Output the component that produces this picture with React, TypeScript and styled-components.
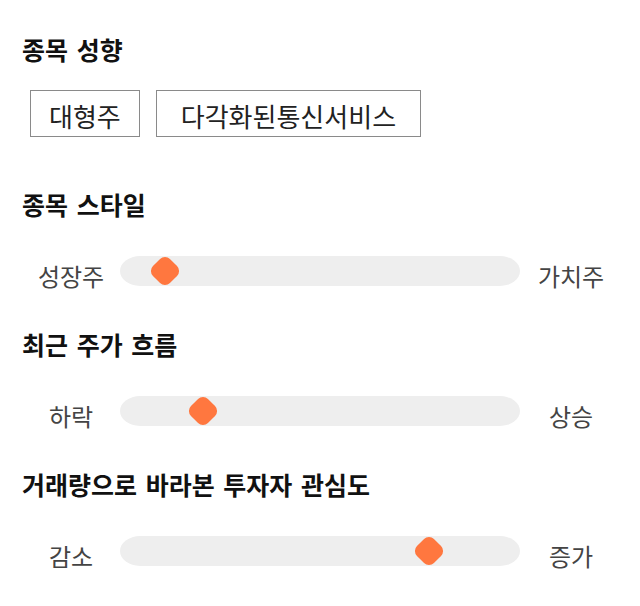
import styled, { createGlobalStyle } from "styled-components"
import React from "react"

const GlobalStyle = createGlobalStyle`
  html, body {
    margin: 0;
    padding: 0;
    background: #ffffff;
  }

  body {
    font-family: "Noto Sans CJK KR", "Noto Sans", sans-serif;
    color: #111;
  }
`

interface SliderData {
  title: string
  left: string
  right: string
  value: number
}

const sliders: SliderData[] = [
  { title: "종목 스타일", left: "성장주", right: "가치주", value: 11.25 },
  { title: "최근 주가 흐름", left: "하락", right: "상승", value: 20.75 },
  { title: "거래량으로 바라본 투자자 관심도", left: "감소", right: "증가", value: 77.25 }
]

const tags = [
  { label: "대형주", pad: 18 },
  { label: "다각화된통신서비스", pad: 24 }
]

const StyleRow = ({ left, right, value }: SliderData) => (
  <SliderRow>
    <SideLabel>{left}</SideLabel>
    <Track>
      <Thumb style={{ left: `${value}%` }} />
    </Track>
    <SideLabel>{right}</SideLabel>
  </SliderRow>
)

export default function App() {
  return <>
    <GlobalStyle />
    <Page>
      <Section>
        <Heading>종목 성향</Heading>
        <TagList>
          {tags.map(tag => (
            <Tag key={tag.label} $pad={tag.pad}>{tag.label}</Tag>
          ))}
        </TagList>
      </Section>

      {sliders.map(slider => (
        <Section key={slider.title} $gap={36}>
          <Heading>{slider.title}</Heading>
          <StyleRow {...slider} />
        </Section>
      ))}
    </Page>
  </>
}

const Page = styled.div`
  width: 640px;
  padding: 33px 0 30px 22px;
  box-sizing: border-box;
  display: flex;
  flex-direction: column;
  gap: 32px;

  & > :nth-child(2) {
    margin-top: 19px;
  }
`

const Section = styled.section<{ $gap?: number }>`
  display: flex;
  flex-direction: column;
  gap: ${p => p.$gap ?? 25}px;
`

const Heading = styled.h2`
  margin: 0;
  font-size: 25px;
  line-height: 32px;
  font-weight: 700;
  word-spacing: 3px;
  color: #111;
`

const TagList = styled.div`
  display: flex;
  gap: 16px;
  margin-left: 8px;
`

const Tag = styled.span<{ $pad: number }>`
  display: inline-flex;
  align-items: center;
  height: 47px;
  padding: 4px ${p => p.$pad}px 0;
  box-sizing: border-box;
  border: 1px solid #8a8a8a;
  font-size: 26px;
  line-height: 1;
  color: #222;
`

const SliderRow = styled.div`
  display: grid;
  grid-template-columns: 98px 400px 102px;
  align-items: start;
`

const SideLabel = styled.span`
  text-align: center;
  font-size: 24px;
  line-height: 40px;
  color: #444;
`

const Track = styled.div`
  position: relative;
  height: 30px;
  background: #eeeeee;
  border-radius: 20px / 15px;
`

const Thumb = styled.span`
  position: absolute;
  top: 50%;
  width: 24px;
  height: 24px;
  margin: -12px 0 0 -12px;
  background: #ff773f;
  border-radius: 7px;
  transform: rotate(45deg);
`
